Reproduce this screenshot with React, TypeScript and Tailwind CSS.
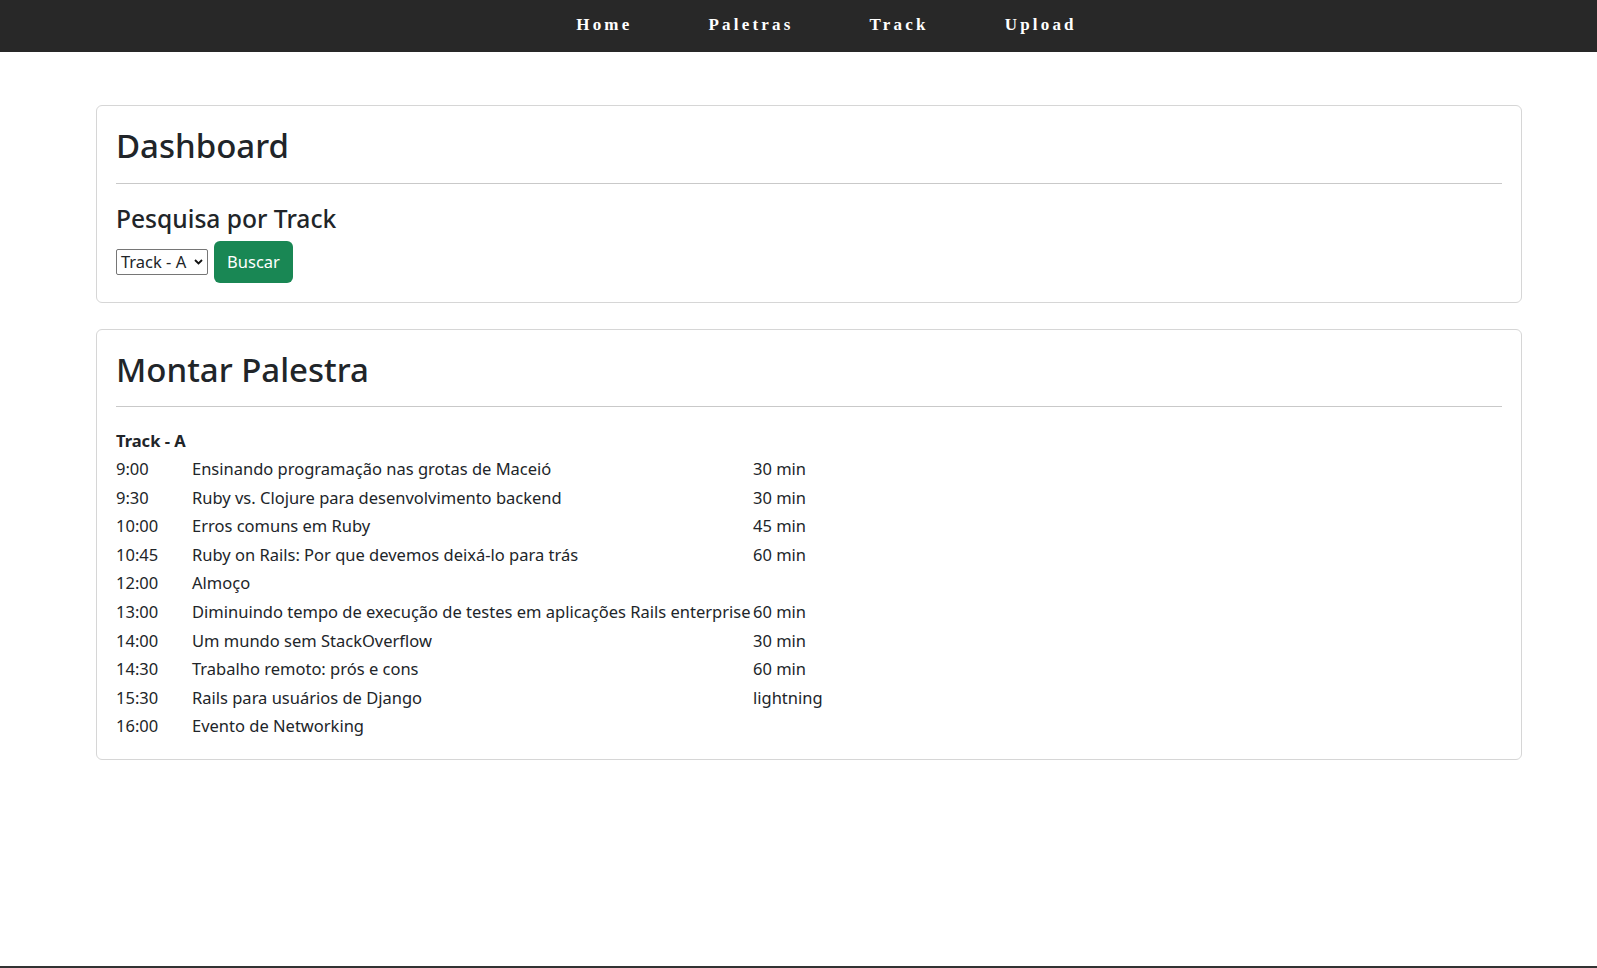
import React from "react";

const rows: [string, string, string][] = [
  ["9:00", "Ensinando programação nas grotas de Maceió", "30 min"],
  ["9:30", "Ruby vs. Clojure para desenvolvimento backend", "30 min"],
  ["10:00", "Erros comuns em Ruby", "45 min"],
  ["10:45", "Ruby on Rails: Por que devemos deixá-lo para trás", "60 min"],
  ["12:00", "Almoço", ""],
  ["13:00", "Diminuindo tempo de execução de testes em aplicações Rails enterprise", "60 min"],
  ["14:00", "Um mundo sem StackOverflow", "30 min"],
  ["14:30", "Trabalho remoto: prós e cons", "60 min"],
  ["15:30", "Rails para usuários de Django", "lightning"],
  ["16:00", "Evento de Networking", ""],
];

export default function App() {
  return (
    <div
      className="h-screen flex flex-col bg-white text-[#212529] overflow-hidden"
      style={{ fontFamily: '"Noto Sans", "Open Sans", sans-serif' }}
    >
      <nav className="h-[52px] shrink-0 bg-[#282828] flex items-center justify-center pl-[56px] pb-[3px]">
        <ul
          className="flex gap-[76px] text-white font-bold text-[17px] tracking-[3.2px]"
          style={{ fontFamily: '"Liberation Serif", "Times New Roman", serif' }}
        >
          <li>Home</li>
          <li>Paletras</li>
          <li>Track</li>
          <li>Upload</li>
        </ul>
      </nav>

      <main className="flex-1 pt-[53px] pl-[96px]">
        <section className="w-[1426px] border border-[#d6d6d6] rounded-[6px] px-[19px] pt-[16px] pb-[19px]">
          <h1 className="text-[33px] leading-[48px] font-medium">Dashboard</h1>
          <hr className="mt-[13px] border-0 border-t border-[#c9c9c9]" />
          <h2 className="mt-[19px] text-[24.6px] leading-[32px] font-medium">Pesquisa por Track</h2>
          <div className="mt-[6px] flex items-center gap-[6px]">
            <div className="relative w-[92px] h-[26px] border border-[#767676] rounded-[2px] flex items-center pl-[4px] text-[16.5px]">
              <span>Track - A</span>
              <svg className="absolute right-[4px] top-[9px]" width="9" height="6" viewBox="0 0 9 6">
                <path d="M1 1l3.5 3.5L8 1" fill="none" stroke="#111" strokeWidth="1.8" />
              </svg>
            </div>
            <button className="w-[79px] h-[42px] rounded-[6px] bg-[#198754] text-white text-[16.5px]">Buscar</button>
          </div>
        </section>

        <section className="mt-[26px] w-[1426px] border border-[#d6d6d6] rounded-[6px] px-[19px] pt-[16px] pb-[18px]">
          <h1 className="text-[33px] leading-[48px] font-medium">Montar Palestra</h1>
          <hr className="mt-[12px] border-0 border-t border-[#c9c9c9]" />
          <div className="mt-[20px] font-bold text-[16.5px] leading-[28px]">Track - A</div>
          <div className="grid grid-cols-[76px_561px_auto] text-[16.5px] leading-[28.6px] w-max whitespace-nowrap">
            {rows.map(([t, title, d]) => (
              <React.Fragment key={t}>
                <div>{t}</div>
                <div>{title}</div>
                <div>{d}</div>
              </React.Fragment>
            ))}
          </div>
        </section>
      </main>
      <footer className="h-[2px] shrink-0 bg-[#333]" />
    </div>
  );
}
